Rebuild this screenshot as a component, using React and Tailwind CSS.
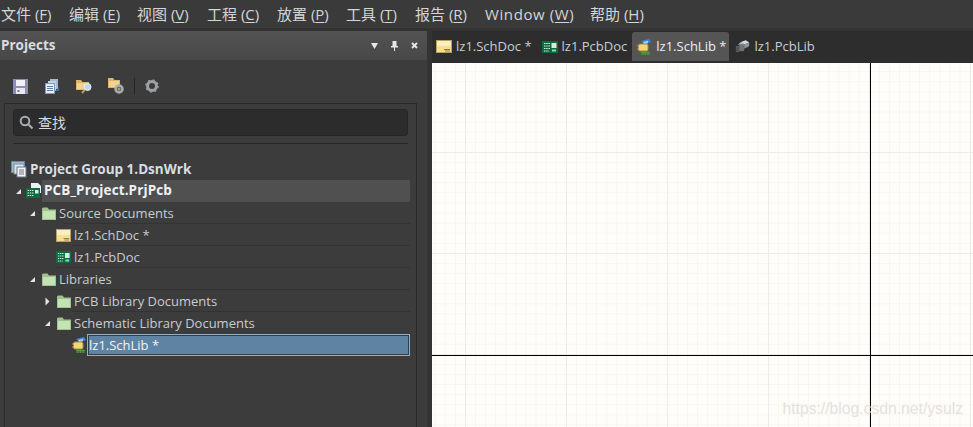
const CJK = '"Open Sans","Noto Sans CJK SC",sans-serif';

function Folder() {
  return (
    <svg width="14" height="13" viewBox="0 0 14 13" className="shrink-0">
      <path d="M0 1.500V13H14V2.500H7L5.500 .5H1Z" fill="#9cc58c" />
      <rect x="1" y="4" width="12" height="8" fill="#c4e2b4" />
    </svg>
  );
}
function Sch({ w = 16 }) {
  return (
    <svg width={w} height="13" viewBox="0 0 16 13" preserveAspectRatio="none" className="shrink-0">
      <rect x=".5" y=".5" width="15" height="12" fill="#f4df95" stroke="#b9a163" />
      <rect x="1" y="1" width="14" height="5" fill="#faefbf" />
      <path d="M8 9.500h6M9 11h5" stroke="#8d7c4a" />
    </svg>
  );
}
function Pcb({ w = 16 }) {
  return (
    <svg width={w} height="12" viewBox="0 0 16 12" preserveAspectRatio="none" className="shrink-0">
      <rect width="16" height="12" fill="#0c6b3f" />
      <path d="M2 2.500h6M2 5h6M2 7.500h6M2 10h5" stroke="#d4efe0" strokeDasharray="1.500 .7" />
      <rect x="9.500" y="2" width="5" height="5" fill="#d7ebe1" />
      <rect x="10" y="8.500" width="4" height="2" fill="#9fd0b5" />
    </svg>
  );
}
function SchLib() {
  return (
    <svg width="15" height="16" viewBox="0 0 15 16" className="shrink-0">
      <path d="M4 2L12 0L14 3L8 5.500Z" fill="#3d86d8" />
      <path d="M6 3L11 1.800V4L7 5.500Z" fill="#a9cdf2" />
      <rect x="1.500" y="5" width="9.500" height="7" rx="1.500" fill="#f0d878" stroke="#a88c3c" />
      <path d="M0 7h2M0 10h2" stroke="#c2a24d" />
      <path d="M6 12v4M8.500 12v4M11 12v4M4 13.500h9M4 15h9" stroke="#4f9a3a" />
    </svg>
  );
}
function PcbLib() {
  return (
    <svg width="15" height="14" viewBox="0 0 18 16" className="shrink-0">
      <path d="M7 2L13 0L17 2.500L11 5Z" fill="#d7dbe0" />
      <path d="M11 5L17 2.500V7L11 10Z" fill="#8e949a" />
      <path d="M5 5H11V13H5Z" fill="#6e7378" />
      <path d="M3 6L7 2L11 5H5Z" fill="#b4b9be" />
      <path d="M1 8h4M1 10.500h4M1 13h4" stroke="#8c9196" />
    </svg>
  );
}
function Tab({ icon, label, active, className = '' }) {
  return (
    <div
      className={`flex items-center gap-[4px] h-[29px] ${active ? 'bg-[#555555] rounded-t-[3px] text-[#eaf0f4] pl-[5px] pr-[3px]' : 'text-[#c9ced2]'} ${className}`}
    >
      {icon}
      <span className="text-[13px] leading-none">{label}</span>
    </div>
  );
}
function Arrow({ open }) {
  return open ? (
    <svg width="7" height="7" viewBox="0 0 7 7" className="shrink-0">
      <path d="M6 1V6H1Z" fill="#e4e4e4" />
    </svg>
  ) : (
    <svg width="7" height="9" viewBox="0 0 7 9" className="shrink-0">
      <path d="M1.500 .5L5.500 4.500L1.500 8.500Z" fill="#e4e4e4" />
    </svg>
  );
}
function Row({ indent, arrow, icon, label, line }) {
  return (
    <div className={`relative flex items-center h-[22px] ${indent}`}>
      <span className="w-[13px] flex items-center justify-start shrink-0">{arrow}</span>
      {icon}
      <span className="ml-[3px] text-[13px] leading-none text-[#c6ccd0] whitespace-nowrap">{label}</span>
      {line && <span className={`absolute bottom-0 right-0 h-px bg-[#333333] ${line}`} />}
    </div>
  );
}

const menus = [
  ['文件 (', 'F', ')', 'w-[68px]', ''],
  ['编辑 (', 'E', ')', 'w-[68px]', ''],
  ['视图 (', 'V', ')', 'w-[70px]', ''],
  ['工程 (', 'C', ')', 'w-[70px]', ''],
  ['放置 (', 'P', ')', 'w-[69px]', ''],
  ['工具 (', 'T', ')', 'w-[69px]', ''],
  ['报告 (', 'R', ')', 'w-[70px]', ''],
  ['Window (', 'W', ')', 'w-[105px]', 'tracking-[0.6px]'],
  ['帮助 (', 'H', ')', 'w-[60px]', ''],
];

export default function App() {
  return (
    <div
      className="w-[973px] h-[427px] overflow-hidden bg-[#333333] flex flex-col text-[#d0d4d8]"
      style={{ fontFamily: CJK }}
    >
      <div className="h-[28px] bg-[#3a3a3a] flex items-center pl-px text-[15px] text-[#d3d6d8] shrink-0">
        {menus.map(([a, b, c, w, t]) => (
          <span key={a} className={`whitespace-nowrap leading-none ${w} ${t}`}>
            {a}
            <span className="underline underline-offset-2">{b}</span>
            {c}
          </span>
        ))}
      </div>
      <div className="flex flex-1 min-h-0 pt-[3px]">
        <div className="w-[427px] shrink-0 flex flex-col bg-[#3c3c3c]">
          <div className="h-[29px] bg-[linear-gradient(#535353,#484848)] flex items-center justify-between pl-px pr-[9px] shrink-0">
            <span className="font-bold text-[13.500px] text-[#d8dde0] leading-none">Projects</span>
            <div className="flex items-center gap-[13px]">
              <svg width="7" height="6" viewBox="0 0 7 6"><path d="M0 0H7L3.500 6Z" fill="#e8e8e8" /></svg>
              <svg width="7" height="10" viewBox="0 0 7 10"><path d="M1.500 0H5.500V5H7V6.500H4V10H3V6.500H0V5H1.500Z" fill="#e8e8e8" /></svg>
              <svg width="7" height="7" viewBox="0 0 7 7"><path d="M1 1L6 6M6 1L1 6" stroke="#e8e8e8" strokeWidth="1.800" /></svg>
            </div>
          </div>
          <div className="h-[43px] flex items-center pl-[13px] pt-[9px] gap-[17px] shrink-0">
            <svg width="15" height="15" viewBox="0 0 15 15">
              <rect width="15" height="15" fill="#8d8db8" />
              <rect x="3" y="1" width="9" height="6" fill="#f2f2f6" />
              <rect x="3" y="9" width="9" height="6" fill="#e8e8ee" />
              <rect x="4.500" y="11" width="2" height="2" fill="#777799" />
            </svg>
            <svg width="14" height="15" viewBox="0 0 14 15">
              <rect x="5" y="0" width="8" height="10" fill="#a8bad0" />
              <rect x="3" y="2" width="8" height="10" fill="#c3d3e6" />
              <rect x="0.500" y="4.500" width="9" height="10" fill="#e6eef7" stroke="#7f9cc0" />
              <path d="M2 7.500h6M2 9.500h6M2 11.500h6" stroke="#5f7fa8" />
              <path d="M10 12L14 8V12Z" fill="#3d6fb0" />
            </svg>
            <svg width="17" height="15" viewBox="0 0 17 15">
              <path d="M0 1H5L6.500 3H13V11H0Z" fill="#d8b46e" />
              <rect x="1" y="4" width="11" height="6" fill="#f0d48e" />
              <circle cx="11.500" cy="8" r="3.500" fill="#c4d7e4" stroke="#e6eef3" />
              <path d="M8.500 11L6 14" stroke="#b89a5c" strokeWidth="2" />
            </svg>
            <svg width="16" height="16" viewBox="0 0 16 16" className="-ml-[2px]">
              <path d="M0 0H5L6.500 2H12V10H0Z" fill="#d8b46e" />
              <rect x="1" y="3" width="10" height="6" fill="#f0d48e" />
              <circle cx="11" cy="11" r="3.500" fill="#53575a" stroke="#a8aeb2" strokeWidth="2.500" />
              <circle cx="11" cy="11" r="1.500" fill="#c49a4e" />
            </svg>
            <div className="flex items-center gap-[10px] -ml-[7px]">
              <span className="w-px h-[16px] bg-[#262626]" />
              <svg width="14" height="14" viewBox="0 0 14 14">
                <circle cx="7" cy="7" r="4.500" fill="none" stroke="#9ba1a5" strokeWidth="3" />
                <circle cx="7" cy="7" r="6" fill="none" stroke="#9ba1a5" strokeWidth="1.500" strokeDasharray="2 2.700" />
              </svg>
            </div>
          </div>
          <div className="flex-1 min-h-0 ml-[4px] mr-[10px] border border-[#2a2a2a] border-b-0 px-[8px]">
            <div className="mt-[5px] h-[27px] bg-[#2c2c2c] border border-[#262626] rounded-[3px] flex items-center pl-[5px] gap-[4px]">
              <svg width="15" height="15" viewBox="0 0 15 15">
                <circle cx="6" cy="6" r="4.300" fill="none" stroke="#a8adb0" strokeWidth="2" />
                <path d="M9.500 9.500L13.500 13.500" stroke="#a8adb0" strokeWidth="2.200" />
              </svg>
              <span className="text-[14px] leading-none text-[#d6dadd]">查找</span>
            </div>
            <div className="h-px bg-[#262626] mt-[7px]" />
            <div className="mt-[15px] -mx-[8px] pr-[6px]">
              <div className="flex items-center h-[21px] pl-[6px] gap-[2px]">
                <svg width="17" height="17" viewBox="0 0 17 17" className="shrink-0">
                  <rect x=".5" y=".5" width="13" height="11" fill="#9fb7d8" stroke="#5f86c0" />
                  <rect x="3" y="3" width="10" height="10" fill="#dde4ec" stroke="#7f8b98" />
                  <rect x="6" y="6" width="9" height="10" fill="#f2f4f6" stroke="#6c7782" />
                  <path d="M8 9h5M8 11h5M8 13h5" stroke="#6c7782" />
                </svg>
                <span className="font-bold text-[13.500px] leading-none text-[#d7dde1]">Project Group 1.DsnWrk</span>
              </div>
              <div className="flex items-center h-[22px] relative">
                <span className="ml-[10px] w-[11px]"><Arrow open /></span>
                <svg width="16" height="16" viewBox="0 0 16 16" className="shrink-0">
                  <path d="M5 0H12L15 3V10H5Z" fill="#eef1f3" />
                  <rect y="5" width="14" height="10" fill="#0c6b3f" />
                  <path d="M1.500 7.500h6M1.500 10h6M1.500 12.500h6" stroke="#d4efe0" strokeDasharray="1.500 .7" />
                  <rect x="9" y="7" width="3.500" height="3.500" fill="#d7ebe1" />
                </svg>
                <div className="flex-1 h-full bg-[#505050] flex items-center">
                  <span className="font-bold text-[13.500px] tracking-[0.1px] leading-none text-[#eef1f3] ml-[2px]">PCB_Project.PrjPcb</span>
                </div>
              </div>
              <div className="relative flex flex-col">
                <Row indent="pl-[24px]" arrow={<Arrow open />} icon={<Folder />} label="Source Documents" line="left-[58px]" />
                <Row indent="pl-[38px]" icon={<Sch w={15} />} label="lz1.SchDoc *" line="left-[67px]" />
                <Row indent="pl-[38px]" icon={<Pcb w={15} />} label="lz1.PcbDoc" line="left-[52px]" />
                <Row indent="pl-[24px]" arrow={<Arrow open />} icon={<Folder />} label="Libraries" line="left-[67px]" />
                <Row indent="pl-[39px]" arrow={<Arrow />} icon={<Folder />} label="PCB Library Documents" line="left-[67px]" />
                <Row indent="pl-[39px]" arrow={<Arrow open />} icon={<Folder />} label="Schematic Library Documents" />
                <div className="flex items-center h-[22px] pl-[67px]">
                  <SchLib />
                  <div className="flex-1 h-[22px] bg-[#5f83a3] border border-[#8fb0cb] outline outline-1 outline-[#2d4050] -outline-offset-2 flex items-center pl-px">
                    <span className="text-[13px] leading-none text-[#f0f4f7]">lz1.SchLib *</span>
                  </div>
                </div>
              </div>
            </div>
          </div>
        </div>
        <div className="w-[5px] shrink-0 bg-[#333333]" />
        <div className="flex-1 min-w-0 flex flex-col">
          <div className="h-[32px] bg-[#2d2d2d] flex items-end pl-[4px] pb-[2px] shrink-0">
            <Tab icon={<Sch />} label="lz1.SchDoc *" />
            <Tab icon={<Pcb />} label="lz1.PcbDoc" className="ml-[10px]" />
            <Tab icon={<SchLib />} label="lz1.SchLib *" active className="ml-[5px]" />
            <Tab icon={<PcbLib />} label="lz1.PcbLib" className="ml-[6px]" />
          </div>
          <div className="relative flex-1 min-h-0 overflow-hidden bg-[#fffdf9] bg-[linear-gradient(90deg,#eeece8_1px,transparent_1px),linear-gradient(180deg,#eeece8_1px,transparent_1px),linear-gradient(90deg,#f8f6f0_1px,transparent_1px),linear-gradient(180deg,#f8f6f0_1px,transparent_1px)] bg-[size:101px_101px,101px_101px,10.100px_10.100px,10.100px_10.100px] bg-[position:33px_0,0_89px,2.700px_0,0_8.200px]">
            <div className="absolute left-[438px] top-0 bottom-0 w-px bg-black" />
            <div className="absolute left-0 right-0 top-[292px] h-px bg-black" />
            <span
              className="absolute right-[10px] bottom-[10px] text-[15.700px] leading-none text-[#e4e2de]"
              style={{ fontFamily: '"Liberation Sans",sans-serif' }}
            >
              https://blog.csdn.net/ysulz
            </span>
          </div>
        </div>
      </div>
    </div>
  );
}
